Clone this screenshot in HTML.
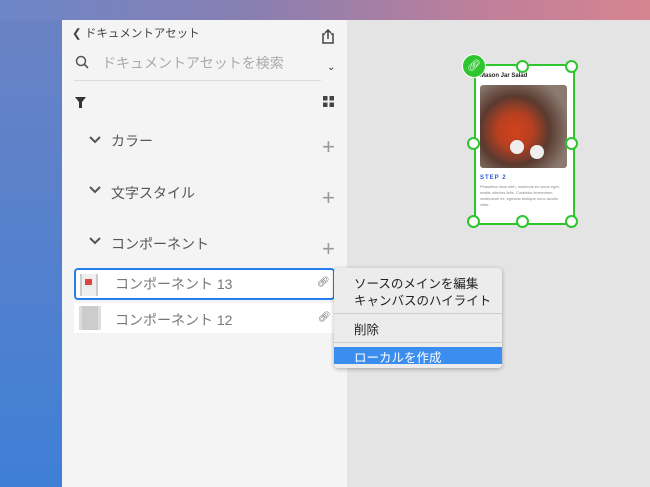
<!DOCTYPE html>
<html><head><meta charset="utf-8"><style>
body{margin:0;width:650px;height:487px;overflow:hidden;position:relative;font-family:"Liberation Sans","Noto Sans CJK JP",sans-serif;background:linear-gradient(90deg,#6c86c8 0%,#8a7fb0 40%,#c07f9a 75%,#d68590 100%);}
.leftbg{position:absolute;left:0;top:20px;width:62px;height:467px;background:linear-gradient(180deg,#6a82c4,#3f7fd6);}
.canvas{position:absolute;left:347px;top:20px;width:303px;height:467px;background:#e4e4e4;}
.panel{position:absolute;left:62px;top:20px;width:285px;height:467px;background:#f4f4f4;color:#555;}
.t{position:absolute;white-space:nowrap}
.plus{position:absolute;left:260px;font-size:22px;color:#999;font-weight:300}
.row{position:absolute;left:12px;width:260px;height:30px;background:#fff;}
.menu{position:absolute;left:334px;top:268px;width:168px;height:100px;background:#ececec;border-radius:4px;box-shadow:0 1px 4px rgba(0,0,0,.3);font-size:12.5px;color:#222}
.h{position:absolute;width:9px;height:9px;border:2px solid #2ec52e;border-radius:50%;background:#fff}
.chev{position:absolute;left:27px}
</style></head><body>
<div class="leftbg"></div>
<div class="canvas"></div>
<div class="panel">
 <div class="t" style="left:10px;top:5px;font-size:11.5px;color:#444">❮ ドキュメントアセット</div>
 <svg style="position:absolute;left:259px;top:9px" width="14" height="15" viewBox="0 0 14 15"><path d="M4 5H2v9h10V5h-2M7 10V1M4 4l3-3 3 3" fill="none" stroke="#444" stroke-width="1.5"/></svg>
 <svg style="position:absolute;left:13px;top:35px" width="14" height="14"><circle cx="6" cy="6" r="4.5" fill="none" stroke="#555" stroke-width="1.5"/><path d="M9.5 9.5L13 13" stroke="#555" stroke-width="1.6"/></svg>
 <div class="t" style="left:40px;top:33px;font-size:14px;color:#aaa">ドキュメントアセットを検索</div>
 <div style="position:absolute;left:12px;top:60px;width:247px;height:1px;background:#ddd"></div>
 <div class="t" style="left:265px;top:42px;font-size:10px;color:#333">⌄</div>
 <svg style="position:absolute;left:13px;top:77px" width="11" height="11"><path d="M0 0h11L7 5v6H4V5z" fill="#333"/></svg>
 <svg style="position:absolute;left:261px;top:76px" width="11" height="11"><rect x="0" y="0" width="4.5" height="4.5" fill="#444"/><rect x="6.5" y="0" width="4.5" height="4.5" fill="#444"/><rect x="0" y="6.5" width="4.5" height="4.5" fill="#444"/><rect x="6.5" y="6.5" width="4.5" height="4.5" fill="#444"/></svg>
 <svg class="chev" style="top:116px" width="12" height="8"><path d="M1 1l5 5 5-5" fill="none" stroke="#555" stroke-width="2"/></svg>
 <div class="t" style="left:49px;top:111px;font-size:14px;color:#555">カラー</div><div class="plus" style="top:114px">+</div>
 <svg class="chev" style="top:166px" width="12" height="8"><path d="M1 1l5 5 5-5" fill="none" stroke="#555" stroke-width="2"/></svg>
 <div class="t" style="left:49px;top:163px;font-size:14px;color:#555">文字スタイル</div><div class="plus" style="top:165px">+</div>
 <svg class="chev" style="top:217px" width="12" height="8"><path d="M1 1l5 5 5-5" fill="none" stroke="#555" stroke-width="2"/></svg>
 <div class="t" style="left:49px;top:214px;font-size:14px;color:#555">コンポーネント</div><div class="plus" style="top:216px">+</div>
 <div class="row" style="top:248px;border:2px solid #2680eb;border-radius:4px;height:28px;width:257px"></div>
 <div style="position:absolute;left:18px;top:254px;width:14px;height:22px;background:#eee;border-left:2px solid #ccc;border-right:2px solid #ccc"><div style="margin:5px 3px;width:7px;height:6px;background:#d44"></div></div>
 <div class="t" style="left:53px;top:254px;font-size:14px;color:#777">コンポーネント 13</div>
 <div class="t" style="left:255px;top:257px;font-size:10px;color:#666">🔗︎</div>
 <div class="row" style="top:283px"></div>
 <div style="position:absolute;left:17px;top:286px;width:16px;height:24px;background:#ccc;border-left:3px solid #ddd;border-right:3px solid #ddd"></div>
 <div class="t" style="left:53px;top:290px;font-size:14px;color:#777">コンポーネント 12</div>
 <div class="t" style="left:256px;top:292px;font-size:10px;color:#666">🔗︎</div>
</div>
<div class="menu">
 <div class="t" style="left:20px;top:5px">ソースのメインを編集</div>
 <div class="t" style="left:20px;top:22px">キャンバスのハイライト</div>
 <div style="position:absolute;left:0;right:0;top:45px;height:1px;background:#ccc"></div>
 <div class="t" style="left:20px;top:51px">削除</div>
 <div style="position:absolute;left:0;right:0;top:74px;height:1px;background:#ccc"></div>
 <div style="position:absolute;left:0;right:0;top:79px;height:17px;background:#3b8df0"></div>
 <div class="t" style="left:20px;top:79px;color:#fff">ローカルを作成</div>
</div>
<div style="position:absolute;left:474px;top:64px;width:97px;height:157px;background:#fff;border:2px solid #2ec52e"></div>
<div class="t" style="left:480px;top:73px;font-size:6px;font-weight:bold;color:#222">Mason Jar Salad</div>
<div style="position:absolute;left:480px;top:85px;width:87px;height:83px;border-radius:3px;background:radial-gradient(circle at 40% 55%,#d2421c 0,#b84020 25%,#5a3a30 50%,#8a7a70 80%)"></div>
<div style="position:absolute;left:510px;top:140px;width:14px;height:14px;border-radius:50%;background:#eee"></div>
<div style="position:absolute;left:530px;top:145px;width:14px;height:14px;border-radius:50%;background:#eee"></div>
<div class="t" style="left:480px;top:175px;font-size:6px;font-weight:bold;color:#2a5ad8;letter-spacing:1px">STEP 2</div>
<div style="position:absolute;left:480px;top:184px;width:85px;font-size:4px;line-height:6px;color:#888">Phasellus risus nibh, maximus eu lacus eget, mattis ultricies felis. Curabitur fermentum vestibulum ex, egestas tristique nunc iaculis vitae.</div>
<div class="h" style="left:516px;top:60px"></div><div class="h" style="left:565px;top:60px"></div>
<div class="h" style="left:467px;top:137px"></div><div class="h" style="left:565px;top:137px"></div>
<div class="h" style="left:467px;top:215px"></div><div class="h" style="left:516px;top:215px"></div><div class="h" style="left:565px;top:215px"></div>
<div style="position:absolute;left:462px;top:54px;width:22px;height:22px;border-radius:50%;background:#2ec52e;border:1px solid #fff;color:#fff;font-size:11px;text-align:center;line-height:22px">🔗︎</div>
</body></html>
